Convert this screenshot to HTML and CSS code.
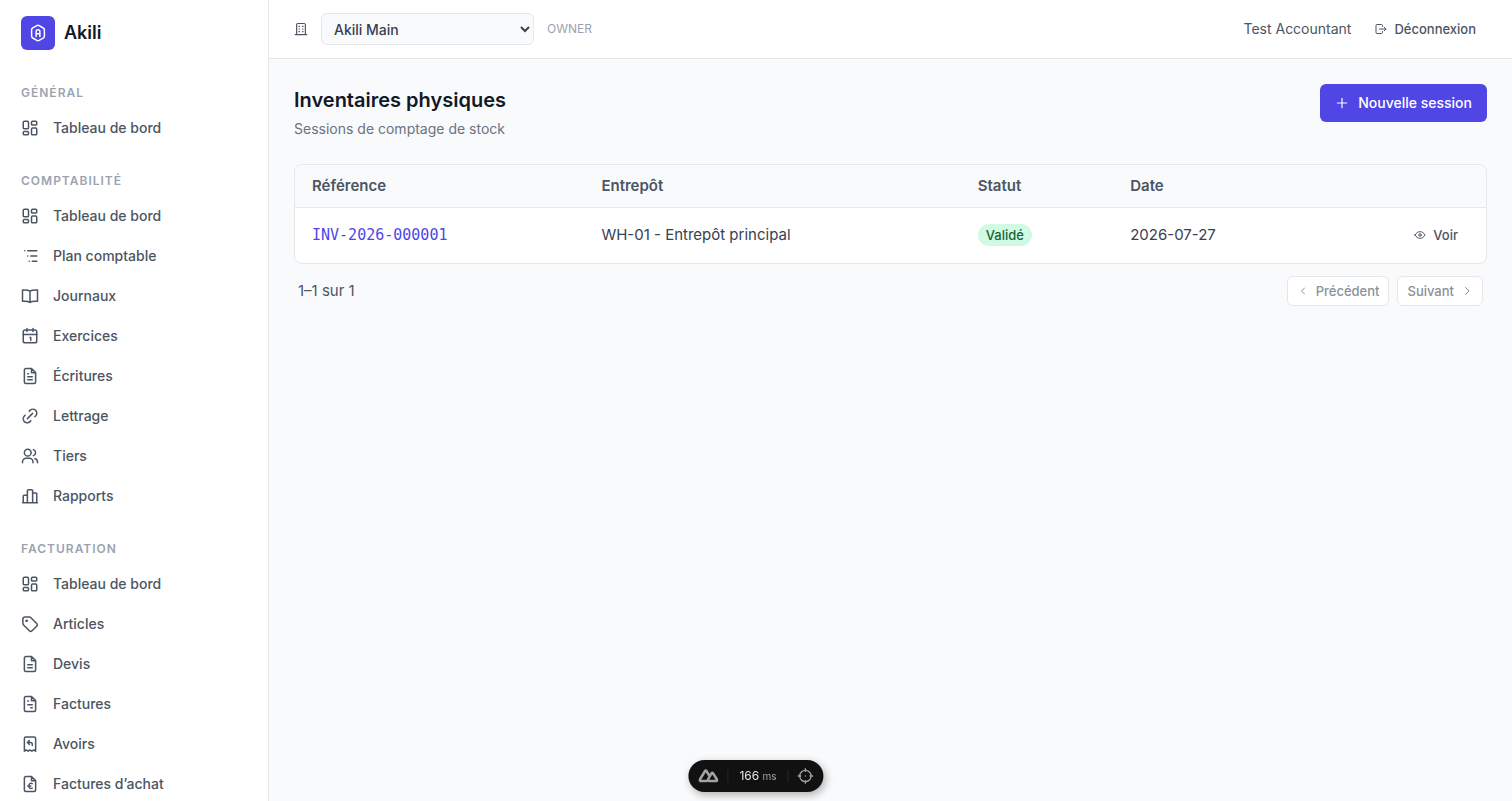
FILE: index.html
```
<!DOCTYPE html>
<html lang="fr">
<head>
    <meta charset="UTF-8">
    <meta name="viewport" content="width=device-width, initial-scale=1.0">
    <title>Inventaires physiques - Akili</title>
    <link rel="stylesheet" href="styles.css">
</head>
<body>
    <svg class="sprite" aria-hidden="true">
        <symbol id="i-dashboard" viewBox="0 0 24 24"><rect x="3" y="3" width="7" height="10" rx="1.5"/><rect x="14" y="3" width="7" height="5" rx="1.5"/><rect x="14" y="12" width="7" height="9" rx="1.5"/><rect x="3" y="16.5" width="7" height="4.5" rx="1.5"/></symbol>
        <symbol id="i-tree" viewBox="0 0 24 24"><path d="M9 5h12M13 12h8M15 19h6M5 5h.01M9 12h.01M11 19h.01"/></symbol>
        <symbol id="i-book" viewBox="0 0 24 24"><path d="M12 5.500c-2-1.500-5-1.800-10-1.500v15c5-.3 8 0 10 1.500 2-1.500 5-1.800 10-1.500V4c-5-.3-8 0-10 1.500zM12 6v14"/></symbol>
        <symbol id="i-calendar" viewBox="0 0 24 24"><rect x="3" y="4" width="18" height="17" rx="2.500"/><path d="M8 2v4M16 2v4M3 10h18M12 14h1v4"/></symbol>
        <symbol id="i-file" viewBox="0 0 24 24"><path d="M14 2H6.500a2 2 0 0 0-2 2v16a2 2 0 0 0 2 2h11a2 2 0 0 0 2-2V7.500zM14 2v5.500h5.500"/><path d="M9 13h6M9 17h6"/></symbol>
        <symbol id="i-file-text" viewBox="0 0 24 24"><path d="M14 2H6.500a2 2 0 0 0-2 2v16a2 2 0 0 0 2 2h11a2 2 0 0 0 2-2V7.500zM14 2v5.500h5.500"/><path d="M9 9h1M9 13h6M9 17h6"/></symbol>
        <symbol id="i-invoice" viewBox="0 0 24 24"><path d="M14 2H6.500a2 2 0 0 0-2 2v16a2 2 0 0 0 2 2h11a2 2 0 0 0 2-2V7.500zM14 2v5.500h5.500"/><path d="M9 8h1M9 13h6M13 17h2"/></symbol>
        <symbol id="i-euro" viewBox="0 0 24 24"><path d="M14 2H6.500a2 2 0 0 0-2 2v16a2 2 0 0 0 2 2h11a2 2 0 0 0 2-2V7.500zM14 2v5.500h5.500"/><path d="M15 11.500c-2.500-1-4.500 0-4.500 3s2 4 4.500 3M9 14.500h4"/></symbol>
        <symbol id="i-credit" viewBox="0 0 24 24"><path d="M4.500 21.500V4.500a2 2 0 0 1 2-2h11a2 2 0 0 1 2 2v17L17 20l-2.500 1.500L12 20l-2.500 1.500L7 20z"/><path d="M11 7.500L8.500 10l2.500 2.500M8.500 10H13a2 2 0 0 1 2 2v2"/></symbol>
        <symbol id="i-link" viewBox="0 0 24 24"><path d="M8.500 15.500l7-7M11 5.500l1-1a5.200 5.200 0 0 1 7.500 7.500l-1 1M13 18.500l-1 1A5.200 5.200 0 0 1 4.500 12l1-1"/></symbol>
        <symbol id="i-users" viewBox="0 0 24 24"><circle cx="9" cy="7.500" r="4.500"/><path d="M2 21v-1a5 5 0 0 1 5-5h4a5 5 0 0 1 5 5v1M16.500 3.500a4.200 4.200 0 0 1 0 8M22 21v-1a5 5 0 0 0-3.500-4.700"/></symbol>
        <symbol id="i-chart" viewBox="0 0 24 24"><path d="M2 21h20M3 21V12a1 1 0 0 1 1-1h4.500M15.500 8H20a1 1 0 0 1 1 1v12M8.500 21V5A1.500 1.500 0 0 1 10 3.500h4A1.500 1.500 0 0 1 15.500 5v16"/></symbol>
        <symbol id="i-tag" viewBox="0 0 24 24"><path d="M2.500 5.500v6.200a2 2 0 0 0 .6 1.400l8.100 8a2.500 2.500 0 0 0 3.500 0l6.200-6.200a2.500 2.500 0 0 0 0-3.500l-8-8.100a2 2 0 0 0-1.400-.6H5.500a3 3 0 0 0-3 2.800z"/><circle cx="7.500" cy="7.800" r=".8"/></symbol>
        <symbol id="i-building" viewBox="0 0 24 24"><path d="M2 21.500h20M4.500 21V4.500a2 2 0 0 1 2-2h11a2 2 0 0 1 2 2V21"/><path d="M8.500 7.500h1M14.500 7.500h1M8.500 12h1M14.500 12h1M8.500 16.500h1M14.500 16.500h1"/></symbol>
        <symbol id="i-logout" viewBox="0 0 24 24"><path d="M15 7V5a2 2 0 0 0-2-2H4a2 2 0 0 0-2 2v14a2 2 0 0 0 2 2h9a2 2 0 0 0 2-2v-2M9 12h13M18.500 8.500L22 12l-3.500 3.500"/></symbol>
        <symbol id="i-plus" viewBox="0 0 24 24"><path d="M12 4v16M4 12h16"/></symbol>
        <symbol id="i-eye" viewBox="0 0 24 24"><path d="M2 12c5-9 15-9 20 0-5 9-15 9-20 0z"/><circle cx="12" cy="12" r="2.500"/></symbol>
        <symbol id="i-left" viewBox="0 0 24 24"><path d="M15 6l-6 6 6 6"/></symbol>
        <symbol id="i-right" viewBox="0 0 24 24"><path d="M9 5l7 7-7 7"/></symbol>
    </svg>

    <div class="layout">
        <aside class="sidebar">
            <a class="brand" href="#">
                <span class="brand-logo">
                    <svg viewBox="0 0 24 24"><path d="M10.500 2.200a3 3 0 0 1 3 0l5.500 3.100a3 3 0 0 1 1.500 2.600v8.200a3 3 0 0 1-1.500 2.600l-5.500 3.100a3 3 0 0 1-3 0L5 18.700a3 3 0 0 1-1.500-2.600V7.900A3 3 0 0 1 5 5.300z"/><path d="M9.500 16.500V10a2.500 2.500 0 0 1 5 0v6.500M9.500 13h5"/></svg>
                </span>
                Akili
            </a>
            <nav class="nav">
                <section class="nav-group">
                    <h2>Général</h2>
                    <a href="#"><svg class="icon"><use href="#i-dashboard"/></svg>Tableau de bord</a>
                </section>
                <section class="nav-group">
                    <h2>Comptabilité</h2>
                    <a href="#"><svg class="icon"><use href="#i-dashboard"/></svg>Tableau de bord</a>
                    <a href="#"><svg class="icon"><use href="#i-tree"/></svg>Plan comptable</a>
                    <a href="#"><svg class="icon"><use href="#i-book"/></svg>Journaux</a>
                    <a href="#"><svg class="icon"><use href="#i-calendar"/></svg>Exercices</a>
                    <a href="#"><svg class="icon"><use href="#i-file-text"/></svg>Écritures</a>
                    <a href="#"><svg class="icon"><use href="#i-link"/></svg>Lettrage</a>
                    <a href="#"><svg class="icon"><use href="#i-users"/></svg>Tiers</a>
                    <a href="#"><svg class="icon"><use href="#i-chart"/></svg>Rapports</a>
                </section>
                <section class="nav-group">
                    <h2>Facturation</h2>
                    <a href="#"><svg class="icon"><use href="#i-dashboard"/></svg>Tableau de bord</a>
                    <a href="#"><svg class="icon"><use href="#i-tag"/></svg>Articles</a>
                    <a href="#"><svg class="icon"><use href="#i-file"/></svg>Devis</a>
                    <a href="#"><svg class="icon"><use href="#i-invoice"/></svg>Factures</a>
                    <a href="#"><svg class="icon"><use href="#i-credit"/></svg>Avoirs</a>
                    <a href="#"><svg class="icon"><use href="#i-euro"/></svg>Factures d’achat</a>
                </section>
            </nav>
        </aside>

        <div class="content">
            <header class="topbar">
                <svg class="icon icon-sm"><use href="#i-building"/></svg>
                <select class="org-select" aria-label="Organisation">
                    <option>Akili Main</option>
                </select>
                <span class="role">OWNER</span>
                <span class="user">Test Accountant</span>
                <button class="btn btn-ghost" type="button"><svg class="icon icon-xs"><use href="#i-logout"/></svg>Déconnexion</button>
            </header>

            <main class="page">
                <div class="page-header">
                    <div>
                        <h1>Inventaires physiques</h1>
                        <p>Sessions de comptage de stock</p>
                    </div>
                    <button class="btn btn-primary" type="button"><svg class="icon icon-sm"><use href="#i-plus"/></svg>Nouvelle session</button>
                </div>

                <div class="card">
                    <table>
                        <thead>
                            <tr>
                                <th class="col-ref">Référence</th>
                                <th class="col-warehouse">Entrepôt</th>
                                <th class="col-status">Statut</th>
                                <th>Date</th>
                                <th class="col-actions"></th>
                            </tr>
                        </thead>
                        <tbody>
                            <tr>
                                <td><a class="ref" href="#">INV-2026-000001</a></td>
                                <td>WH-01 - Entrepôt principal</td>
                                <td><span class="badge">Validé</span></td>
                                <td>2026-07-27</td>
                                <td class="col-actions"><button class="btn btn-ghost" type="button"><svg class="icon icon-xs"><use href="#i-eye"/></svg>Voir</button></td>
                            </tr>
                        </tbody>
                    </table>
                </div>

                <div class="pagination">
                    <span>1–1 sur 1</span>
                    <div class="pages">
                        <button class="btn btn-outline" type="button" disabled><svg class="icon icon-xs"><use href="#i-left"/></svg>Précédent</button>
                        <button class="btn btn-outline" type="button" disabled>Suivant<svg class="icon icon-xs"><use href="#i-right"/></svg></button>
                    </div>
                </div>
            </main>
        </div>
    </div>

    <div class="devtools">
        <button type="button" aria-label="Nuxt"><svg class="nuxt" viewBox="0 0 24 16"><path d="M13 14h8.500a1 1 0 0 0 .9-1.500L17.500 4.500a1 1 0 0 0-1.700 0L10.500 14H2.500a1 1 0 0 1-.9-1.500L8 2a1 1 0 0 1 1.700 0L13 7.500"/></svg></button>
        <span class="timing">166 <small>ms</small></span>
        <button type="button" aria-label="Inspecteur"><svg class="target" viewBox="0 0 24 24"><circle cx="12" cy="12" r="8.500"/><path d="M12 1v4M12 19v4M1 12h4M19 12h4M12 12h.01"/></svg></button>
    </div>
</body>
</html>
```
FILE: styles.css
```
* {
    box-sizing: border-box;
}

body {
    margin: 0;
    font-family: Inter, "Liberation Sans", sans-serif;
    font-size: 14px;
    line-height: 22px;
    color: #374151;
    background: #f9fafc;
}

a {
    color: inherit;
    text-decoration: none;
}

button,
select {
    font: inherit;
    color: inherit;
    cursor: pointer;
}

svg {
    fill: none;
    stroke: currentColor;
    stroke-width: 2;
    stroke-linecap: round;
    stroke-linejoin: round;
}

.sprite {
    display: none;
}

.icon {
    width: 18px;
    height: 18px;
    flex-shrink: 0;
}

.icon-sm {
    width: 14px;
    height: 14px;
}

.icon-xs {
    width: 12px;
    height: 12px;
}

.layout {
    display: flex;
    height: 100vh;
}

/* Sidebar */
.sidebar {
    width: 269px;
    flex-shrink: 0;
    padding: 16px 12px 0;
    overflow: hidden;
    background: #fff;
    border-right: 1px solid #e5e7eb;
}

.brand {
    display: flex;
    align-items: center;
    gap: 9px;
    padding: 0 9px;
    margin-bottom: 32px;
    font-size: 18px;
    font-weight: 600;
    color: #111827;
}

.brand-logo {
    display: flex;
    align-items: center;
    justify-content: center;
    width: 34px;
    height: 34px;
    border-radius: 6px;
    color: #fff;
    background: #4f46e5;
}

.brand-logo svg {
    width: 18px;
    height: 18px;
}

.nav {
    display: flex;
    flex-direction: column;
    gap: 22px;
}

.nav-group h2 {
    margin: 0 0 4px;
    padding: 0 9px;
    font-size: 12px;
    font-weight: 600;
    line-height: 22px;
    letter-spacing: 1px;
    text-transform: uppercase;
    color: #9ca3af;
}

.nav-group a {
    display: flex;
    align-items: center;
    gap: 14px;
    padding: 9px;
    border-radius: 6px;
    font-weight: 500;
    color: #4b5563;
}

.nav-group a:hover {
    background: #f3f4f6;
}

/* Top bar */
.content {
    flex: 1;
    min-width: 0;
}

.topbar {
    display: flex;
    align-items: center;
    gap: 13px;
    height: 59px;
    padding: 0 25px;
    background: #fff;
    border-bottom: 1px solid #e5e7eb;
    color: #4b5563;
}

.org-select {
    width: 213px;
    height: 32px;
    padding: 0 8px;
    border: 1px solid #e5e7eb;
    border-radius: 6px;
    font-weight: 500;
    color: #374151;
    background: #f9fafc;
}

.role {
    font-size: 12px;
    color: #9ca3af;
}

.user {
    margin-left: auto;
}

/* Buttons */
.btn {
    display: inline-flex;
    align-items: center;
    gap: 7px;
    padding: 4px 10px;
    border: 1px solid transparent;
    border-radius: 6px;
    font-size: 13px;
    font-weight: 500;
    line-height: 20px;
    background: transparent;
}

.btn-ghost {
    color: #4b5563;
}

.btn-primary {
    gap: 9px;
    padding: 8px 14px;
    font-size: 14px;
    color: #fff;
    background: #4f46e5;
}

.btn-outline {
    padding: 4px 9px;
    border-color: #e5e7eb;
    color: #8b919b;
    background: #fff;
    cursor: default;
}

/* Page */
.page {
    padding: 25px;
}

.page-header {
    display: flex;
    align-items: flex-start;
    justify-content: space-between;
    margin-bottom: 24px;
}

.page-header h1 {
    margin: 0 0 2px;
    font-size: 20px;
    font-weight: 600;
    line-height: 32px;
    color: #111827;
}

.page-header p {
    margin: 0;
    color: #6b7280;
}

.card {
    overflow: hidden;
    background: #fff;
    border: 1px solid #e5e7eb;
    border-radius: 8px;
}

table {
    width: 100%;
    table-layout: fixed;
    border-collapse: collapse;
    font-size: 15px;
}

th,
td {
    padding: 10px 17px;
    text-align: left;
}

th {
    font-weight: 600;
    color: #4b5563;
    background: #f9fafc;
    border-bottom: 1px solid #e5e7eb;
}

td {
    height: 55px;
}

.col-ref {
    width: 24.3%;
}

.col-warehouse {
    width: 31.6%;
}

.col-status {
    width: 12.8%;
}

.col-actions {
    text-align: right;
}

.ref {
    font-family: "DejaVu Sans Mono", "Liberation Mono", monospace;
    color: #4f46e5;
}

.badge {
    display: inline-block;
    padding: 0 8px;
    border-radius: 11px;
    font-size: 13px;
    font-weight: 500;
    color: #166534;
    background: #d1fae5;
}

.pagination {
    display: flex;
    align-items: center;
    justify-content: space-between;
    padding: 12px 4px;
    font-size: 15px;
    color: #4b5563;
}

.pages {
    display: flex;
    gap: 8px;
}

/* Floating toolbar */
.devtools {
    position: fixed;
    bottom: 9px;
    left: 50%;
    display: flex;
    align-items: center;
    height: 32px;
    padding: 0 10px;
    border-radius: 16px;
    color: #e5e5e5;
    background: #111;
    box-shadow: 2px 3px 8px rgba(0, 0, 0, 0.3);
    transform: translateX(-50%);
}

.devtools button {
    display: flex;
    padding: 0;
    border: 0;
    color: #a3a3a3;
    background: none;
}

.nuxt {
    width: 20px;
    height: 14px;
    stroke-width: 3;
}

.target {
    width: 16px;
    height: 16px;
}

.timing {
    margin: 0 9px;
    padding: 0 11px;
    border-left: 1px solid #262626;
    border-right: 1px solid #262626;
    font-size: 12px;
    line-height: 12px;
}

.timing small {
    font-size: 10px;
    color: #a3a3a3;
}
```
